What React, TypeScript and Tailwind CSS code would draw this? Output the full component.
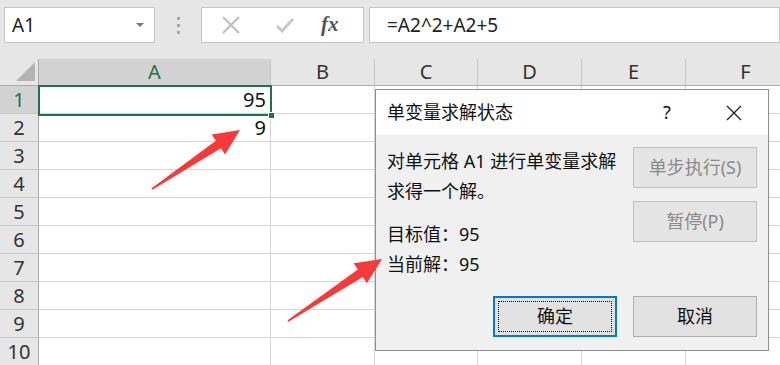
import React from 'react';

const cols = [
  { name: 'A', w: 'w-[232px]' },
  { name: 'B', w: 'w-[104px]' },
  { name: 'C', w: 'w-[103px]' },
  { name: 'D', w: 'w-[104px]' },
  { name: 'E', w: 'w-[104px]' },
  { name: 'F', w: 'w-[120px]' },
];

const rows = [1, 2, 3, 4, 5, 6, 7, 8, 9, 10];

const values: Record<number, string> = { 1: '95', 2: '9' };

type Pt = [number, number];

function arrowPoints(tail: Pt, tip: Pt, head = 26, wing = 12, shaft = 4.5) {
  const dx = tip[0] - tail[0];
  const dy = tip[1] - tail[1];
  const len = Math.hypot(dx, dy);
  const ux = dx / len;
  const uy = dy / len;
  const nx = -uy;
  const ny = ux;
  const bx = tip[0] - ux * head;
  const by = tip[1] - uy * head;
  const pts: Pt[] = [
    [tail[0] + nx * 0.8, tail[1] + ny * 0.8],
    [bx + nx * shaft, by + ny * shaft],
    [bx + nx * wing, by + ny * wing],
    tip,
    [bx - nx * wing, by - ny * wing],
    [bx - nx * shaft, by - ny * shaft],
    [tail[0] - nx * 0.8, tail[1] - ny * 0.8],
  ];
  return pts.map((p) => p.join(',')).join(' ');
}

function DialogButton({
  label,
  disabled,
  primary,
}: {
  label: string;
  disabled?: boolean;
  primary?: boolean;
}) {
  if (primary) {
    return (
      <div className="w-[124px] h-[41px] border-2 border-[#0078d7] bg-[#e1e1e1] p-[3px]">
        <div className="w-full h-full border border-dotted border-black flex items-center justify-center text-[18px] text-[#111]">
          {label}
        </div>
      </div>
    );
  }
  return (
    <div
      className={`w-[124px] h-[41px] border border-[#adadad] bg-[#e1e1e1] flex items-center justify-center text-[18px] ${
        disabled ? 'text-[#8a8a8a] border-[#bfbfbf] bg-[#e4e4e4]' : 'text-[#111]'
      }`}
    >
      {label}
    </div>
  );
}

export default function App() {
  return (
    <div
      className="relative w-[780px] h-[365px] overflow-hidden bg-[#e6e6e6]"
      style={{ fontFamily: '"Noto Sans", "Noto Sans CJK SC", sans-serif' }}
    >
      {/* Formula bar */}
      <div className="flex items-start h-[59px] pt-[7px] pl-[4px]">
        <div className="w-[151px] h-[36px] bg-white border border-[#c6c6c6] flex items-center justify-between pl-[7px] pr-[10px]">
          <span className="text-[19px] text-[#222]">A1</span>
          <svg width="8" height="4" viewBox="0 0 8 4">
            <polygon points="0,0 8,0 4,4" fill="#777" />
          </svg>
        </div>
        <div className="w-[46px] h-[36px] flex flex-col items-center justify-center gap-[4px]">
          <div className="w-[3px] h-[3px] bg-[#a8a8a8]" />
          <div className="w-[3px] h-[3px] bg-[#a8a8a8]" />
          <div className="w-[3px] h-[3px] bg-[#a8a8a8]" />
        </div>
        <div className="w-[163px] h-[36px] bg-white border border-[#c6c6c6] flex items-center pl-[19px]">
          <svg width="20" height="20" viewBox="0 0 20 20">
            <path d="M2 2 L18 18 M18 2 L2 18" stroke="#bdbdbd" strokeWidth="2" />
          </svg>
          <svg width="20" height="18" viewBox="0 0 20 18" className="ml-[34px]">
            <path d="M2 10 L7 15 L18 3" stroke="#c8c8c8" strokeWidth="3" fill="none" />
          </svg>
          <span
            className="ml-[26px] text-[21px] italic font-bold text-[#555]"
            style={{ fontFamily: '"Liberation Serif", serif' }}
          >
            fx
          </span>
        </div>
        <div className="ml-[5px] flex-1 h-[36px] bg-white border border-[#c6c6c6] flex items-center pl-[17px]">
          <span className="text-[19px] text-[#222]">=A2^2+A2+5</span>
        </div>
      </div>

      {/* Column headers */}
      <div className="flex h-[27px]">
        <div className="relative w-[39px] shrink-0 border-r border-b border-[#ababab] bg-[#e6e6e6]">
          <svg width="20" height="20" viewBox="0 0 20 20" className="absolute right-[2px] bottom-[3px]">
            <polygon points="0,19 19,0 19,19" fill="#b4b4b4" />
          </svg>
        </div>
        {cols.map((c) => (
          <div
            key={c.name}
            className={`${c.w} shrink-0 border-r border-b border-[#c6c6c6] flex items-center justify-center text-[20px] ${
              c.name === 'A' ? 'bg-[#d2d2d2] text-[#217346] border-b-[#ababab]' : 'bg-[#e6e6e6] text-[#333] border-b-[#ababab]'
            }`}
          >
            {c.name}
          </div>
        ))}
      </div>

      {/* Rows */}
      {rows.map((r) => (
        <div key={r} className="flex h-[28px]">
          <div
            className={`w-[39px] shrink-0 border-r border-b border-r-[#ababab] border-b-[#c6c6c6] flex items-center justify-center text-[20px] ${
              r === 1 ? 'bg-[#d2d2d2] text-[#217346]' : 'bg-[#e6e6e6] text-[#333]'
            }`}
          >
            {r}
          </div>
          {cols.map((c) => (
            <div
              key={c.name}
              className={`${c.w} shrink-0 bg-white border-r border-b border-[#d4d4d4] flex items-center justify-end pr-[4px] text-[20px] text-[#111]`}
            >
              {c.name === 'A' ? values[r] ?? '' : ''}
            </div>
          ))}
        </div>
      ))}

      {/* Selection */}
      <div className="absolute left-[38px] top-[85px] w-[234px] h-[31px] border-2 border-[#217346]" />
      <div className="absolute left-[268px] top-[112px] w-[7px] h-[7px] bg-[#217346] border border-white" />

      {/* Dialog */}
      <div className="absolute left-[375px] top-[89px] w-[394px] h-[262px] border border-[#8f8f8f] bg-[#f0f0f0] flex flex-col">
        <div className="h-[45px] bg-white flex items-center pl-[11px] text-[18px] text-[#111]">
          <span className="flex-1">单变量求解状态</span>
          <span className="w-[20px] text-center mr-[48px]">?</span>
          <svg width="18" height="18" viewBox="0 0 18 18" className="mr-[25px]">
            <path d="M2 2 L16 16 M16 2 L2 16" stroke="#222" strokeWidth="1.3" />
          </svg>
        </div>
        <div className="flex-1 flex flex-col pl-[11px] pr-[11px] pb-[13px]">
          <div className="flex justify-between">
            <div className="pt-[11px] text-[18px] text-[#111] leading-[30px]">
              <div>对单元格 A1 进行单变量求解</div>
              <div>求得一个解。</div>
              <div className="mt-[13px]">目标值：95</div>
              <div>当前解：95</div>
            </div>
            <div className="pt-[12px] flex flex-col gap-[13px]">
              <DialogButton label="单步执行(S)" disabled />
              <DialogButton label="暂停(P)" disabled />
            </div>
          </div>
          <div className="mt-auto flex justify-end gap-[16px]">
            <DialogButton label="确定" primary />
            <DialogButton label="取消" />
          </div>
        </div>
      </div>

      {/* Arrows */}
      <svg className="absolute left-0 top-0 pointer-events-none" width="780" height="365">
        <polygon points={arrowPoints([152, 189], [240, 130])} fill="#f63a3a" />
        <polygon points={arrowPoints([288, 321], [382, 259])} fill="#f63a3a" />
      </svg>
    </div>
  );
}
